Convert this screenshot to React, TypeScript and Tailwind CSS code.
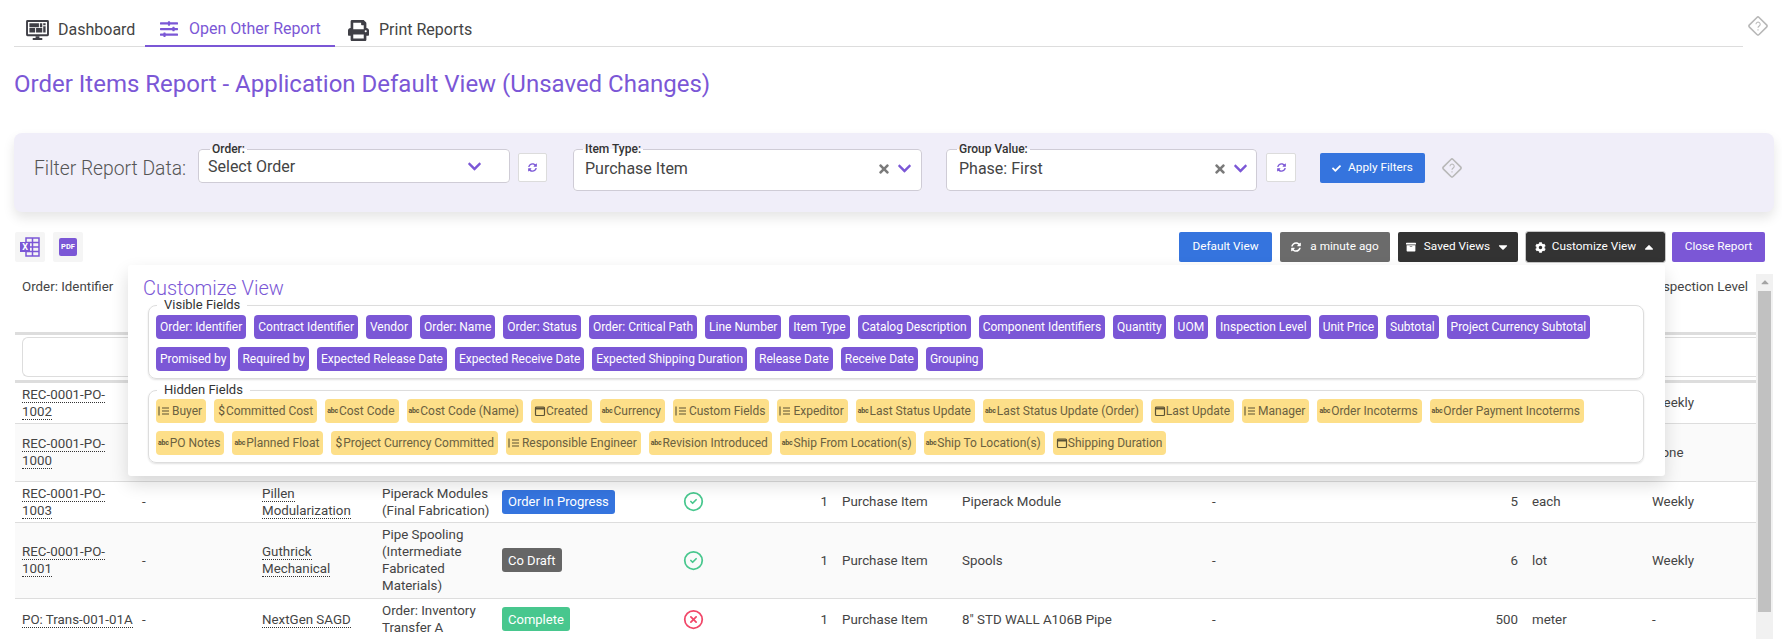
import React from 'react';
import { CircleCheck, CircleX } from 'lucide-react';
import { FaArchive, FaCaretDown, FaCaretUp, FaCheck, FaChevronDown, FaCog, FaPrint, FaSlidersH, FaSyncAlt, FaTimes } from 'react-icons/fa';

type FieldIcon = 'abc' | 'list' | 'money' | 'cal';

const visibleFields = [
    'Order: Identifier', 'Contract Identifier', 'Vendor', 'Order: Name', 'Order: Status', 'Order: Critical Path',
    'Line Number', 'Item Type', 'Catalog Description', 'Component Identifiers', 'Quantity', 'UOM', 'Inspection Level',
    'Unit Price', 'Subtotal', 'Project Currency Subtotal', 'Promised by', 'Required by', 'Expected Release Date',
    'Expected Receive Date', 'Expected Shipping Duration', 'Release Date', 'Receive Date', 'Grouping',
];

const hiddenFields: [FieldIcon, string][] = [
    ['list', 'Buyer'], ['money', 'Committed Cost'], ['abc', 'Cost Code'], ['abc', 'Cost Code (Name)'], ['cal', 'Created'],
    ['abc', 'Currency'], ['list', 'Custom Fields'], ['list', 'Expeditor'], ['abc', 'Last Status Update'],
    ['abc', 'Last Status Update (Order)'], ['cal', 'Last Update'], ['list', 'Manager'], ['abc', 'Order Incoterms'],
    ['abc', 'Order Payment Incoterms'], ['abc', 'PO Notes'], ['abc', 'Planned Float'], ['money', 'Project Currency Committed'],
    ['list', 'Responsible Engineer'], ['abc', 'Revision Introduced'], ['abc', 'Ship From Location(s)'],
    ['abc', 'Ship To Location(s)'], ['cal', 'Shipping Duration'],
];

// only the first and last headers show from under the popover
const headers = ['Order: Identifier', '', '', '', '', '', '', '', '', '', '', '', 'Inspection Level'];

interface Row {
    id: string;
    contract?: string;
    vendor?: string;
    name?: string[];
    status?: { label: string; cls: string };
    ok?: boolean;
    line?: string;
    itemType?: string;
    catalog?: string;
    component?: string;
    qty?: string;
    uom?: string;
    level: string;
    cls: string;
}

const rows: Row[] = [
    { id: 'REC-0001-PO-\n1002', level: 'Weekly', cls: 'h-[42px] bg-white' },
    { id: 'REC-0001-PO-\n1000', level: 'None', cls: 'h-[58px] bg-[#fafafa]' },
    { id: 'REC-0001-PO-\n1003', contract: '-', vendor: 'Pillen\nModularization', name: ['Piperack Modules', '(Final Fabrication)'], status: { label: 'Order In Progress', cls: 'bg-[#3574de] text-white' }, ok: true, line: '1', itemType: 'Purchase Item', catalog: 'Piperack Module', component: '-', qty: '5', uom: 'each', level: 'Weekly', cls: 'h-[41px] bg-white' },
    { id: 'REC-0001-PO-\n1001', contract: '-', vendor: 'Guthrick\nMechanical', name: ['Pipe Spooling', '(Intermediate', 'Fabricated', 'Materials)'], status: { label: 'Co Draft', cls: 'bg-[#666666] text-white' }, ok: true, line: '1', itemType: 'Purchase Item', catalog: 'Spools', component: '-', qty: '6', uom: 'lot', level: 'Weekly', cls: 'h-[76px] bg-[#fafafa]' },
    { id: 'PO: Trans-001-01A', contract: '-', vendor: 'NextGen SAGD', name: ['Order: Inventory', 'Transfer A'], status: { label: 'Complete', cls: 'bg-[#48c78e] text-white' }, ok: false, line: '1', itemType: 'Purchase Item', catalog: '8" STD WALL A106B Pipe', component: '-', qty: '500', uom: 'meter', level: '-', cls: 'h-[42px] bg-white' },
];

const DashboardIcon = () => (
    <svg viewBox="0 0 24 21" className="w-[23px] h-[20px] text-[#3f3f46]" fill="currentColor">
        <path fillRule="evenodd" d="M1.5 0h21A1.5 1.5 0 0 1 24 1.5v14a1.5 1.5 0 0 1-1.5 1.5h-21A1.5 1.5 0 0 1 0 15.500v-14A1.500 1.500 0 0 1 1.500 0zM2 2v13h20V2z" />
        <path d="M3.500 3.500h10v4h-10zM14.500 3.500h2.500v4h-2.500zM18 3.500h2.500v2h-2.500zM18 6.500h2.500v6.500h-2.500zM3.500 8.500h6v4.500h-6zM10.500 8.500h6.500v4.500h-6.500zM10 17h4v2h3v2H7v-2h3z" />
    </svg>
);

const HelpDiamond = () => (
    <svg viewBox="0 0 20 20" className="w-[20px] h-[20px]" fill="none" stroke="#b8b8b8" strokeWidth="1.600">
        <rect x="3.200" y="3.200" width="13.600" height="13.600" rx="1.500" transform="rotate(45 10 10)" />
        <path d="M8 8.200a2.100 2.100 0 1 1 3.200 1.800c-.8.500-1.200.9-1.200 1.800" strokeWidth="1.100" />
        <path d="M10 13.300v1.100" strokeWidth="1.100" />
    </svg>
);

const RefreshButton = ({ cls }: { cls: string }) => (
    <button className={`flex items-center justify-center h-[29px] mt-[11px] bg-white border border-[#dcdcdc] rounded-[2px] text-[#7b57d6] ${cls}`}>
        <FaSyncAlt size={9} />
    </button>
);

const SelectBox = ({ label, value, cls, clearable, legendCls, rowCls }: { label: string; value: string; cls: string; clearable?: boolean; legendCls: string; rowCls: string }) => (
    <fieldset className={`border border-[#cfccd6] rounded-[4px] bg-white ${cls}`}>
        <legend className={`text-[12px] leading-[14px] px-[2px] text-[#333] font-medium ${legendCls}`}>{label}</legend>
        <div className={`flex items-start justify-between ${rowCls}`}>
            <span className="text-[16px] leading-[22px] text-[#444]">{value}</span>
            <span className="flex items-center mt-[3px] text-[#7b57d6]">
                {clearable && <FaTimes size={14} className="text-[#7a7a7a] mr-[6px]" />}
                <FaChevronDown size={15} />
            </span>
        </div>
    </fieldset>
);

const TypeIcon = ({ type }: { type: FieldIcon }) => {
    if (type === 'abc') return <span className="text-[7px] font-bold leading-none tracking-[-0.2px] mr-[1px] text-[#5c5335]">abc</span>;
    if (type === 'money') return <span className="text-[12px] ml-[2px] mr-[1px] text-[#5c5335]">$</span>;
    if (type === 'list') {
        return (
            <svg viewBox="0 0 12 12" className="w-[12px] h-[12px] mr-[2px]" fill="none" stroke="#5c5335" strokeWidth="1.100">
                <path d="M1 1.500v9M4 3h7M4 6h7M4 9h7" />
            </svg>
        );
    }
    return (
        <svg viewBox="0 0 12 12" className="w-[12px] h-[12px] ml-[1px]" fill="none" stroke="#5c5335" strokeWidth="1.200">
            <rect x="1.500" y="2" width="9" height="8.500" rx="1" />
            <path d="M1.500 3.500h9" strokeWidth="2" />
        </svg>
    );
};

const DottedLink = ({ text }: { text: string }) => <span className="whitespace-pre border-b border-dotted border-[#333]">{text}</span>;

const CELL = 'px-[7px] py-0 border-b border-[#dddddd] text-left align-middle font-normal';

export default function App() {
    return (
        <div className="h-[639px] overflow-hidden bg-white font-['Roboto',sans-serif] text-[#444] flex flex-col pl-[14px] pr-[8px]">
            {/* Tabs */}
            <div className="flex shrink-0 items-start">
                <div className="flex w-[1729px] h-[47px] border-b border-[#dddddd] text-[16px]">
                    <div className="flex items-center h-[46px] w-[131px] pl-[12px] pt-[14px]">
                        <DashboardIcon />
                        <span className="ml-[9px]">Dashboard</span>
                    </div>
                    <div className="flex items-center h-[47px] w-[190px] pl-[15px] pt-[13px] text-[#7b57d6] border-b-2 border-[#7b57d6]">
                        <FaSlidersH size={18} />
                        <span className="ml-[11px]">Open Other Report</span>
                    </div>
                    <div className="flex items-center h-[46px] pl-[13px] pt-[14px]">
                        <FaPrint size={21} className="text-[#3f3f46]" />
                        <span className="ml-[10px]">Print Reports</span>
                    </div>
                </div>
                <div className="ml-[5px] mt-[16px]"><HelpDiamond /></div>
            </div>

            <h1 className="mt-[21px] text-[24px] leading-[32px] text-[#7b57d6] shrink-0">Order Items Report - Application Default View (Unsaved Changes)</h1>

            {/* Filters */}
            <div className="mt-[33px] h-[79px] shrink-0 flex items-start pt-[9px] pl-[20px] bg-[#f0eef9] rounded-[8px] shadow-[0_6px_12px_rgba(0,0,0,0.1)]">
                <span className="w-[164px] mt-[14px] text-[19.3px] leading-[26px] font-light text-[#555]">Filter Report Data:</span>
                <SelectBox label="Order:" value="Select Order" cls="w-[312px] h-[41px] pl-[9px] pr-[27px]" legendCls="ml-[2px]" rowCls="" />
                <RefreshButton cls="ml-[8px] w-[29px]" />
                <SelectBox label="Item Type:" value="Purchase Item" cls="ml-[26px] w-[349px] h-[49px] pl-[11px] pr-[9px]" legendCls="-ml-[2px]" rowCls="mt-[2px]" clearable />
                <SelectBox label="Group Value:" value="Phase: First" cls="ml-[24px] w-[311px] h-[49px] pl-[12px] pr-[8px]" legendCls="-ml-[2px]" rowCls="mt-[2px]" clearable />
                <RefreshButton cls="ml-[9px] w-[30px]" />
                <button className="ml-[24px] mt-[11px] w-[105px] h-[30px] flex items-center justify-center bg-[#3574de] text-white text-[11.8px] rounded-[2px]">
                    <FaCheck size={9} className="mr-[7px]" />
                    Apply Filters
                </button>
                <div className="ml-[17px] mt-[16px]"><HelpDiamond /></div>
            </div>

            {/* Toolbar + customize popover */}
            <div className="relative mt-[20px] h-[30px] shrink-0 flex items-center pl-[1px] pr-[9px] text-[11.8px] text-white">
                <button className="w-[30px] h-[30px] flex items-center justify-center bg-[#f5f5f5] rounded-[2px]">
                    <svg viewBox="0 0 20 20" className="w-[20px] h-[20px]">
                        <path d="M6 1h13v18H6z" fill="none" stroke="#7b57d6" strokeWidth="1.500" />
                        <path d="M6 5.500h13M6 10h13M6 14.500h13M12.500 1v18" stroke="#7b57d6" strokeWidth="1.500" />
                        <rect x="0" y="5" width="10" height="10" fill="#7b57d6" />
                        <text x="5" y="13" textAnchor="middle" fontSize="9" fontWeight="700" fill="#ffffff">X</text>
                    </svg>
                </button>
                <button className="ml-[8px] w-[30px] h-[30px] flex items-center justify-center bg-[#f5f5f5] rounded-[2px]">
                    <span className="w-[18px] h-[18px] flex items-center justify-center bg-[#7b57d6] rounded-[2px] text-white text-[7.5px] font-bold leading-none">PDF</span>
                </button>
                <div className="flex-1" />
                <button className="w-[93px] h-[30px] bg-[#3574de] rounded-[2px]">Default View</button>
                <button className="ml-[8px] w-[110px] h-[30px] flex items-center justify-center bg-[#6b6b6b] rounded-[2px]">
                    <FaSyncAlt size={10} className="mr-[9px]" />
                    a minute ago
                </button>
                <button className="ml-[8px] w-[120px] h-[30px] flex items-center justify-center bg-[#333333] rounded-[2px]">
                    <FaArchive size={10} className="mr-[8px]" />
                    Saved Views
                    <FaCaretDown size={14} className="ml-[6px]" />
                </button>
                <button className="ml-[8px] w-[139px] h-[30px] flex items-center justify-center bg-[#333333] rounded-[2px] outline outline-1 outline-[#c8c8c8]">
                    <FaCog size={11} className="mr-[6px]" />
                    Customize View
                    <FaCaretUp size={14} className="ml-[6px]" />
                </button>
                <button className="ml-[7px] w-[93px] h-[30px] bg-[#7b57d6] rounded-[2px]">Close Report</button>

                <div className="absolute z-10 left-[114px] top-[33px] w-[1537px] h-[211px] bg-white rounded-[3px] shadow-[0_8px_18px_rgba(0,0,0,0.14)] pt-[12px] pl-[15px] pr-[21px] text-[#444]">
                    <div className="h-[20px] text-[20px] leading-[22px] font-light text-[#7b57d6]">Customize View</div>
                    <fieldset className="ml-[5px] h-[82px] border border-[#dddddd] rounded-[8px] pl-[7px] shadow-[0_1px_2px_rgba(0,0,0,0.12)]">
                        <legend className="ml-[1px] px-[7px] text-[13px] leading-[16px] text-[#333]">Visible Fields</legend>
                        <div className="flex flex-wrap gap-x-[8px] gap-y-[8px] pt-[2px]">
                            {visibleFields.map(f => (
                                <span key={f} className="h-[24px] flex items-center px-[4px] rounded-[4px] bg-[#7b57d6] text-white text-[12px]">{f}</span>
                            ))}
                        </div>
                    </fieldset>
                    <fieldset className="ml-[5px] mt-[3px] h-[81px] border border-[#dddddd] rounded-[8px] pl-[7px] shadow-[0_1px_2px_rgba(0,0,0,0.12)]">
                        <legend className="ml-[1px] px-[7px] text-[13px] leading-[16px] text-[#333]">Hidden Fields</legend>
                        <div className="flex flex-wrap gap-x-[8px] gap-y-[8px] pt-[1px]">
                            {hiddenFields.map(([icon, f]) => (
                                <span key={f} className="h-[24px] flex items-center pl-[2px] pr-[4px] rounded-[4px] bg-[#fddf89] text-[#6b6140] text-[12px]">
                                    <TypeIcon type={icon} />
                                    {f}
                                </span>
                            ))}
                        </div>
                    </fieldset>
                </div>
            </div>

            {/* Report table */}
            <div className="mt-[12px] flex-1 min-h-0 flex overflow-hidden">
                <div className="w-[1741px] ml-[1px] overflow-hidden">
                    <table className="w-[1741px] table-fixed border-collapse text-[13.33px] leading-[17px]">
                        <colgroup>
                            <col className="w-[120px]" />
                            <col className="w-[120px]" />
                            <col className="w-[120px]" />
                            <col className="w-[120px]" />
                            <col className="w-[181px]" />
                            <col className="w-[94px]" />
                            <col className="w-[65px]" />
                            <col className="w-[120px]" />
                            <col className="w-[250px]" />
                            <col className="w-[235px]" />
                            <col className="w-[85px]" />
                            <col className="w-[120px]" />
                            <col className="w-[111px]" />
                        </colgroup>
                        <thead>
                            <tr className="h-[59px]">
                                {headers.map((h, i) => (
                                    <th key={i} className="px-[7px] pt-[4px] align-top text-left font-normal border-b-[3px] border-[#dddddd] whitespace-nowrap">{h}</th>
                                ))}
                            </tr>
                            <tr className="h-[48px]">
                                <th colSpan={13} className="pl-[7px] pr-0 border-b-[3px] border-[#dddddd]">
                                    <div className="h-[40px] border border-r-0 border-[#dddddd] rounded-l-[6px] bg-white" />
                                </th>
                            </tr>
                        </thead>
                        <tbody>
                            {rows.map(r => (
                                <tr key={r.id} className={r.cls}>
                                    <td className={CELL}><DottedLink text={r.id} /></td>
                                    <td className={CELL}>{r.contract}</td>
                                    <td className={CELL}>{r.vendor && <DottedLink text={r.vendor} />}</td>
                                    <td className={CELL}>{r.name?.map(l => <div key={l} className="whitespace-nowrap">{l}</div>)}</td>
                                    <td className={CELL}>
                                        {r.status && <span className={`inline-flex items-center align-middle h-[24px] px-[6px] rounded-[3px] text-[13px] ${r.status.cls}`}>{r.status.label}</span>}
                                    </td>
                                    <td className={CELL}>
                                        {r.ok === true && <CircleCheck size={21} strokeWidth={2} className="text-[#48c78e]" />}
                                        {r.ok === false && <CircleX size={21} strokeWidth={2} className="text-[#f14668]" />}
                                    </td>
                                    <td className={`${CELL} text-right`}>{r.line}</td>
                                    <td className={CELL}>{r.itemType}</td>
                                    <td className={CELL}>{r.catalog}</td>
                                    <td className={CELL}>{r.component}</td>
                                    <td className={`${CELL} text-right`}>{r.qty}</td>
                                    <td className={CELL}>{r.uom}</td>
                                    <td className={CELL}>{r.level}</td>
                                </tr>
                            ))}
                        </tbody>
                    </table>
                </div>
                {/* Scrollbar */}
                <div className="w-[17px] bg-[#f1f1f1] flex flex-col items-center">
                    <FaCaretUp size={12} className="mt-[2px] text-[#a3a3a3]" />
                    <div className="mt-[3px] w-[13px] h-[321px] bg-[#c1c1c1]" />
                </div>
            </div>
        </div>
    );
}
